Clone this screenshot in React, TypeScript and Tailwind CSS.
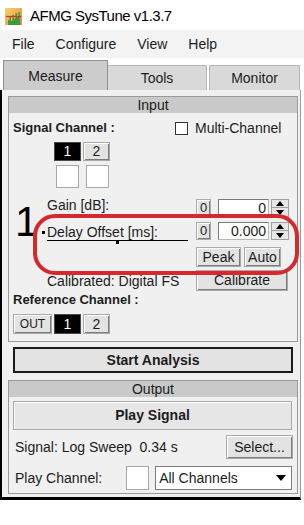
const raised =
  "flex items-center justify-center bg-[#e3e3e3] border border-[#a9a9a9] shadow-[inset_1px_1px_0_#ffffff,inset_-1px_-1px_0_#7c7c7c]";
const pressed = "flex items-center justify-center bg-black text-white border border-[#4a4a4a]";

function AppIcon() {
  return (
    <svg width="17" height="17" viewBox="0 0 17 17">
      <defs>
        <linearGradient id="ic" x1="0" y1="0" x2="1" y2="1">
          <stop offset="0" stopColor="#f6d56e" />
          <stop offset="1" stopColor="#e9823a" />
        </linearGradient>
      </defs>
      <rect width="17" height="17" fill="url(#ic)" />
      <path d="M3 17V12H4.5V9H6V13H7.5V7H9V11H10.5V5H12V9H13.5V4H15V17Z" fill="#3f9a3a" />
      <path d="M1 8.5H16" stroke="#d8322c" strokeWidth="1.2" />
    </svg>
  );
}

function Spinner() {
  return (
    <div className="w-[18px] h-[18px] flex flex-col">
      <div className="h-[9px] flex items-center justify-center bg-[#e6e6e6] border border-[#a0a0a0]">
        <svg width="8" height="5" viewBox="0 0 8 5">
          <path d="M0 5L4 0L8 5Z" fill="#000" />
        </svg>
      </div>
      <div className="h-[9px] flex items-center justify-center bg-[#e6e6e6] border border-t-0 border-[#a0a0a0]">
        <svg width="8" height="5" viewBox="0 0 8 5">
          <path d="M0 0L4 5L8 0Z" fill="#000" />
        </svg>
      </div>
    </div>
  );
}

function NumRow({ value }: { value: string }) {
  return (
    <div className="h-[18px] flex items-center">
      <div className={raised + " w-[15px] h-[18px] text-[13px]"}>0</div>
      <div className="ml-[7px] w-[51px] h-[18px] bg-white border border-[#b8b8b8] border-t-[#7a7a7a] border-l-[#7a7a7a] flex items-center justify-end pr-[2px] text-[14px]">
        {value}
      </div>
      <div className="ml-[2px]">
        <Spinner />
      </div>
    </div>
  );
}

export default function App() {
  return (
    <div className="relative w-[304px] h-[525px] bg-white overflow-hidden font-['Liberation_Sans',Arial,sans-serif] text-[14px] text-[#1c1c1c]">
      {/* title */}
      <div className="h-[30px] flex items-center pl-[5px] pt-[2px]">
        <AppIcon />
        <span className="ml-[8px] text-[15px] tracking-[-0.5px] text-black">AFMG SysTune v1.3.7</span>
      </div>

      {/* menu */}
      <div className="h-[28px] bg-[#f3f3f3] flex items-center pl-[12px] gap-[21px]">
        <span>File</span>
        <span>Configure</span>
        <span>View</span>
        <span>Help</span>
      </div>

      {/* tabs */}
      <div className="h-[32px] flex items-end pl-[3px]">
        <div className="w-[105px] h-[30px] bg-[#cccccc] border border-b-0 border-[#8f8f8f] flex items-center justify-center pt-[2px]">
          Measure
        </div>
        <div className="w-[99px] h-[25px] bg-[#d9d9d9] border-t border-r border-[#b5b5b5] flex items-center justify-center">
          Tools
        </div>
        <div className="ml-[2px] w-[91px] h-[25px] bg-[#d9d9d9] border-t border-x border-[#b5b5b5] flex items-center justify-center">
          Monitor
        </div>
      </div>

      {/* panel */}
      <div className="w-[301px] h-[410px] bg-[#f0f0f0] border-l-2 border-b-[3px] border-r border-l-black border-b-black border-r-[#9a9a9a] flex flex-col">
        {/* Input */}
        <div className="mt-[6px] ml-[6px] w-[290px] h-[246px] border border-[#9a9a9a] flex flex-col">
          <div className="h-[16px] bg-[#c9c9c9] flex items-center justify-center">Input</div>

          <div className="mt-[5px] h-[20px] flex items-center pl-[4px]">
            <span className="font-bold text-[13px]">Signal Channel :</span>
            <div className="ml-auto w-[122px] flex items-center">
              <div className="w-[13px] h-[13px] bg-white border border-[#333]" />
              <span className="ml-[7px]">Multi-Channel</span>
            </div>
          </div>

          <div className="mt-[4px] h-[19px] flex pl-[45px] gap-[2px]">
            <div className={pressed + " w-[27px] h-[19px]"}>1</div>
            <div className={raised + " w-[27px] h-[19px]"}>2</div>
          </div>

          <div className="mt-[4px] h-[23px] flex pl-[47px] gap-[7px]">
            <div className="w-[23px] h-[23px] bg-white border border-[#a8a8a8]" />
            <div className="w-[23px] h-[23px] bg-white border border-[#a8a8a8]" />
          </div>

          {/* gain / delay block */}
          <div className="mt-[9px] h-[94px] flex">
            <div className="ml-[6px] w-[26px] pt-[4px] text-[42px] leading-none text-black">1</div>
            <div className="w-[6px] pt-[34px]">
              <div className="ml-[1px] w-[3px] h-[3px] bg-black" />
            </div>
            <div className="w-[141px] flex flex-col">
              <div className="h-[16px] leading-[16px]">Gain [dB]:</div>
              <div className="mt-[11px] h-[17px] leading-[16px] border-b border-black">Delay Offset [ms]:</div>
              <div className="ml-[69px] w-[3px] h-[3px] bg-black" />
              <div className="mt-[29px] h-[16px] leading-[16px]">Calibrated: Digital FS</div>
            </div>
            <div className="ml-[8px] w-[95px] pt-[2px] flex flex-col">
              <NumRow value="0" />
              <div className="mt-[5px]">
                <NumRow value="0.000" />
              </div>
              <div className="mt-[7px] h-[20px] flex gap-[3px]">
                <div className={raised + " w-[45px] h-[20px]"}>Peak</div>
                <div className={raised + " w-[37px] h-[20px]"}>Auto</div>
              </div>
              <div className={raised + " mt-[3px] w-[92px] h-[21px]"}>Calibrate</div>
            </div>
          </div>

          <div className="h-[18px] flex items-center pl-[4px]">
            <span className="font-bold text-[13px]">Reference Channel :</span>
          </div>
          <div className="mt-[5px] h-[20px] flex pl-[4px] gap-[2px]">
            <div className={raised + " w-[39px] h-[20px] text-[12px]"}>OUT</div>
            <div className={pressed + " w-[27px] h-[20px]"}>1</div>
            <div className={raised + " w-[27px] h-[20px]"}>2</div>
          </div>
        </div>

        {/* Start Analysis */}
        <div className="mt-[5px] ml-[11px] w-[280px] h-[26px] bg-[#e3e3e3] border-2 border-[#1a1a1a] flex items-center justify-center font-bold">
          Start Analysis
        </div>

        {/* Output */}
        <div className="mt-[7px] ml-[6px] w-[290px] h-[114px] border border-[#9a9a9a] flex flex-col">
          <div className="h-[16px] bg-[#c9c9c9] flex items-center justify-center">Output</div>
          <div className="mt-[4px] ml-[4px] w-[279px] h-[29px] bg-[#e6e6e6] border border-[#a9a9a9] shadow-[inset_1px_1px_0_#ffffff] flex items-center justify-center font-bold">
            Play Signal
          </div>
          <div className="mt-[5px] h-[24px] flex items-center pl-[6px] pr-[4px]">
            <span>Signal: Log Sweep&nbsp; 0.34 s</span>
            <div className={raised + " ml-auto w-[67px] h-[24px]"}>Select...</div>
          </div>
          <div className="mt-[7px] h-[24px] flex items-center pl-[6px]">
            <span>Play Channel:</span>
            <div className="ml-[24px] w-[23px] h-[24px] bg-white border border-[#a8a8a8]" />
            <div className="ml-[6px] w-[137px] h-[24px] bg-white border border-[#7a7a7a] flex items-center pl-[3px] pr-[5px]">
              <span>All Channels</span>
              <svg className="ml-auto" width="10" height="6" viewBox="0 0 10 6">
                <path d="M0 0L5 6L10 0Z" fill="#000" />
              </svg>
            </div>
          </div>
        </div>
      </div>

      {/* red annotation */}
      <div className="absolute left-[33px] top-[214px] w-[266px] h-[61px] border-4 border-[#d52a2d] rounded-[22px] pointer-events-none" />
    </div>
  );
}
